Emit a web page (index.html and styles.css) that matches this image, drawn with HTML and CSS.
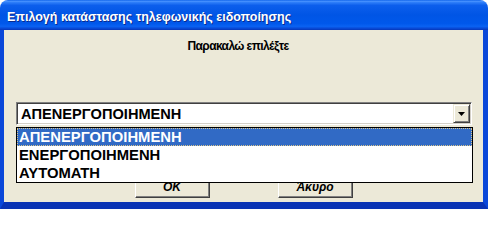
FILE: index.html
```html
<!DOCTYPE html>
<html lang="el">
<head>
<meta charset="utf-8">
<title>Επιλογή κατάστασης τηλεφωνικής ειδοποίησης</title>
<link rel="stylesheet" href="styles.css">
</head>
<body>
<div class="window">
  <div class="titlebar"><span class="title">Επιλογή κατάστασης τηλεφωνικής ειδοποίησης</span></div>
  <div class="client">
    <div class="prompt">Παρακαλώ επιλέξτε</div>
    <div class="combo-wrap">
      <div class="combo">
        <span class="combo-value">ΑΠΕΝΕΡΓΟΠΟΙΗΜΕΝΗ</span>
        <span class="combo-btn"><svg width="7" height="4" viewBox="0 0 7 4"><path d="M0 0h7L3.5 4z" fill="#000"/></svg></span>
      </div>
      <ul class="dropdown">
        <li class="selected">ΑΠΕΝΕΡΓΟΠΟΙΗΜΕΝΗ</li>
        <li>ΕΝΕΡΓΟΠΟΙΗΜΕΝΗ</li>
        <li>ΑΥΤΟΜΑΤΗ</li>
      </ul>
    </div>
    <div class="buttons">
      <button class="btn">OK</button>
      <button class="btn">Άκυρο</button>
    </div>
  </div>
</div>
</body>
</html>
```

FILE: styles.css
```css
html, body {
  margin: 0;
  width: 488px;
  height: 209px;
  overflow: hidden;
  background: #ffffff;
}

.window {
  display: flex;
  flex-direction: column;
  height: 209px;
}

.titlebar {
  flex: none;
  height: 30px;
  box-sizing: border-box;
  padding: 3px 0 0 7px;
  display: flex;
  align-items: center;
  border-radius: 8px 8px 0 0;
  background: linear-gradient(to bottom,
    #0A5FE8 0%, #4A93FF 4%, #2E7EF9 8%, #0C5EEC 18%,
    #0055E5 50%, #0058EB 78%, #0A62F2 88%, #0848D4 95%, #0636B8 100%);
}

.title {
  font: bold 12.5px "Liberation Sans", "DejaVu Sans", sans-serif;
  color: #ffffff;
  text-shadow: 1px 1px 0 #0A2A8C;
  white-space: nowrap;
}

.client {
  flex: 1;
  display: flex;
  flex-direction: column;
  background: #ECE9D8;
  border-style: solid;
  border-color: #0A47D9;
  border-width: 0 5px 7px 4px;
  border-bottom-color: #0933B4;
}

.prompt {
  margin-top: 8px;
  padding-right: 11px;
  text-align: center;
  font: bold 12px/16px "Liberation Sans", "DejaVu Sans", sans-serif;
  letter-spacing: -0.6px;
  color: #000000;
}

.combo-wrap {
  position: relative;
  margin: 48px 11px 0 12px;
}

.combo {
  height: 23px;
  box-sizing: border-box;
  display: flex;
  align-items: center;
  background: #ffffff;
  border: 1px solid;
  border-color: #808080 #ffffff #ffffff #808080;
  box-shadow: inset 1px 1px 0 #404040, inset -1px -1px 0 #D4D0C8;
  padding: 1px;
}

.combo-value {
  flex: 1;
  padding-left: 3px;
  font: bold 14.6px "Liberation Sans", Arial, sans-serif;
  color: #000000;
}

.combo-btn {
  width: 17px;
  height: 19px;
  box-sizing: border-box;
  display: flex;
  align-items: center;
  justify-content: center;
  background: #ECE9D8;
  border: 1px solid;
  border-color: #ECE9D8 #404040 #404040 #ECE9D8;
  box-shadow: inset 1px 1px 0 #ffffff, inset -1px -1px 0 #808080;
}

.dropdown {
  position: absolute;
  left: 0;
  right: -1px;
  top: calc(100% + 2px);
  margin: 0;
  padding: 0;
  list-style: none;
  background: #ffffff;
  border: 1px solid #000000;
}

.dropdown li {
  height: 18px;
  box-sizing: border-box;
  padding-left: 2px;
  font: bold 14.8px/18px "Liberation Sans", Arial, sans-serif;
  color: #000000;
  white-space: nowrap;
}

.dropdown li.selected {
  background: #316AC5;
  color: #ffffff;
  outline: 1px dotted #D9C48A;
  outline-offset: -1px;
}

.buttons {
  display: flex;
  justify-content: center;
  gap: 68px;
  margin-top: 50px;
}

.btn {
  width: 75px;
  height: 23px;
  box-sizing: border-box;
  margin: 0;
  padding: 0;
  background: #ECE9D8;
  border: 1px solid;
  border-color: #ffffff #404040 #404040 #ffffff;
  box-shadow: inset -1px -1px 0 #808080;
  font: italic bold 12px "Liberation Sans", Arial, sans-serif;
  color: #000000;
}
```
